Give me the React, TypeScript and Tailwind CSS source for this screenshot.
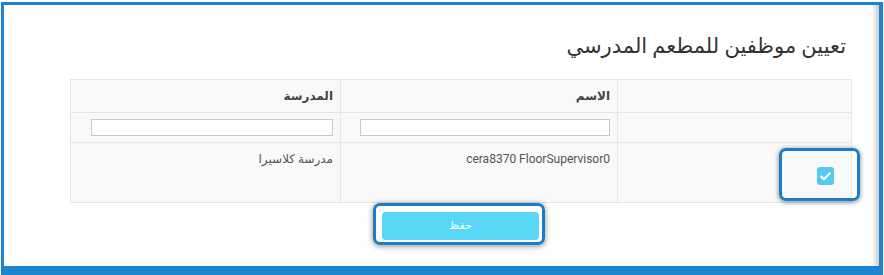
import { Check } from "lucide-react";

export default function App() {
  return (
    <div className="w-[884px] h-[275px] bg-white pt-[2px] pl-[1px] font-['Roboto','DejaVu_Sans',sans-serif]">
      <div className="h-[273px] w-[882px] border-t-[3px] border-l-[3px] border-r-[4px] border-b-[9px] border-[#1b86cf] bg-white shadow-[inset_-7px_0_4px_-3px_#cfcfcf] flex flex-col">
        <h1 dir="rtl" className="pt-[25px] pr-[33px] text-[21px] leading-[32px] text-[#333] font-normal">
          تعيين موظفين للمطعم المدرسي
        </h1>

        <div className="mt-[17px] ml-[66px] w-[781px]">
          <table dir="rtl" className="w-full border-collapse bg-[#f9f9f9] text-[12px] text-[#555] table-fixed">
            <colgroup>
              <col className="w-[234px]" />
              <col className="w-[277px]" />
              <col className="w-[270px]" />
            </colgroup>
            <thead>
              <tr className="h-[33px]">
                <th className="border border-[#e6e6e6]"></th>
                <th className="border border-[#e6e6e6] text-right px-[7px] font-bold text-[#444]">الاسم</th>
                <th className="border border-[#e6e6e6] text-right px-[7px] font-bold text-[#444]">المدرسة</th>
              </tr>
            </thead>
            <tbody>
              <tr className="h-[30px]">
                <td className="border border-[#e6e6e6]"></td>
                <td className="border border-[#e6e6e6] pr-[7px] pl-[7px]">
                  <input className="block w-[250px] h-[17px] border border-[#c9c9c9] bg-white ml-auto" />
                </td>
                <td className="border border-[#e6e6e6] pr-[7px]">
                  <input className="block w-[242px] h-[17px] border border-[#c9c9c9] bg-white ml-auto" />
                </td>
              </tr>
              <tr className="h-[60px]">
                <td className="border border-[#e6e6e6] relative">
                  <div className="absolute right-[-9px] top-[5px] w-[81px] h-[53px] rounded-[7px] border-[3px] border-[#1a7dc6] shadow-[0_1px_4px_1px_rgba(0,0,0,0.35)] flex items-center justify-center pt-[3px] pl-[12px]">
                    <span className="w-[17px] h-[18px] rounded-[3px] bg-[#56caee] flex items-center justify-center">
                      <Check size={13} strokeWidth={4} color="#fff" />
                    </span>
                  </div>
                </td>
                <td className="border border-[#e6e6e6] align-top text-right pr-[7px] pt-[7px]">
                  <span dir="ltr">cera8370 FloorSupervisor0</span>
                </td>
                <td className="border border-[#e6e6e6] align-top text-right pr-[7px] pt-[7px]">مدرسة كلاسيرا</td>
              </tr>
            </tbody>
          </table>

          <div className="flex justify-center mt-[9px]">
            <div className="relative">
              <div className="absolute left-[-9px] right-[-6px] top-[-9px] bottom-[-5px] rounded-[7px] border-[3px] border-[#1a7dc6] shadow-[0_1px_5px_1px_rgba(0,0,0,0.35)]"></div>
              <button className="relative w-[157px] h-[28px] rounded-[4px] bg-[#58d8f6] text-white text-[11px]">حفظ</button>
            </div>
          </div>
        </div>
      </div>
    </div>
  );
}
